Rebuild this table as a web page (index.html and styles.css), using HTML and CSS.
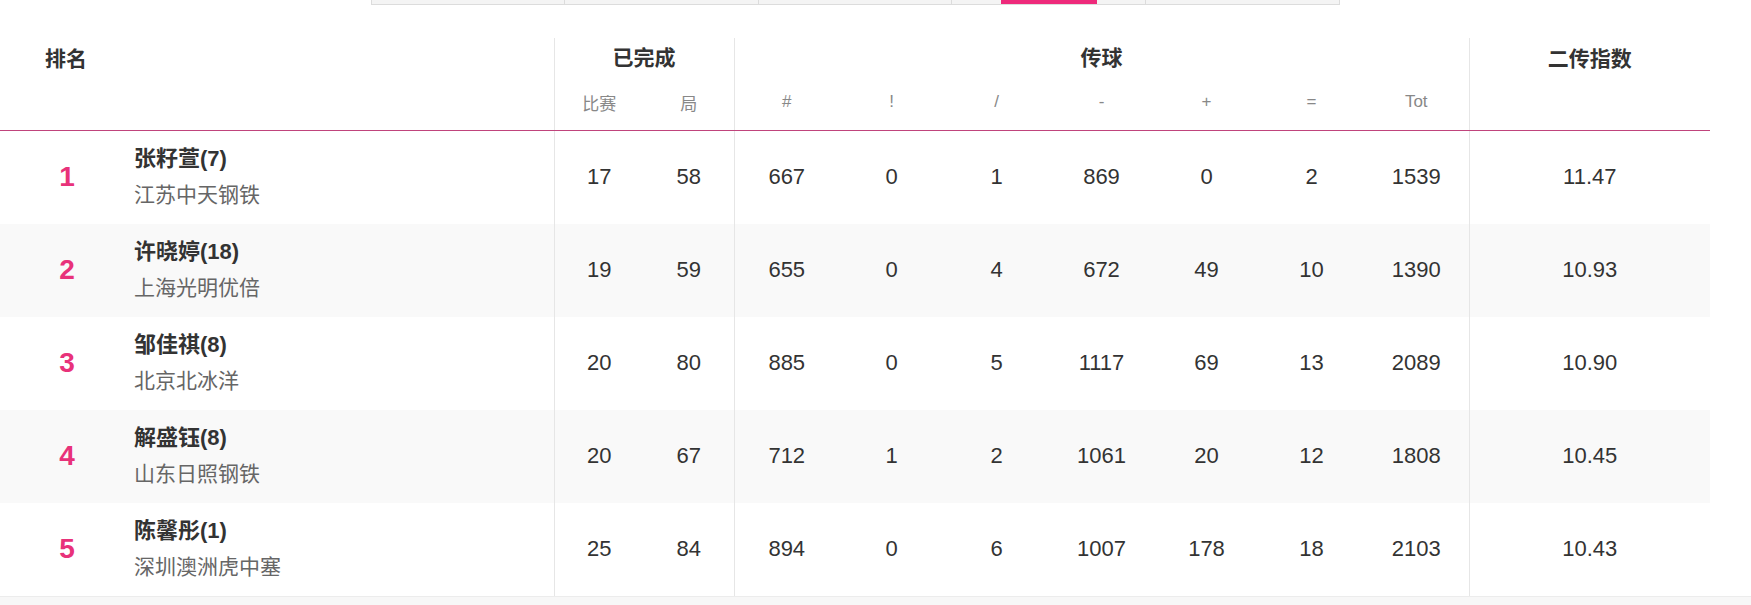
FILE: index.html
```html
<!DOCTYPE html>
<html lang="zh-CN">
<head>
<meta charset="utf-8">
<title>二传排名</title>
<link rel="stylesheet" href="styles.css">
</head>
<body>
<div class="page">
  <div class="tabs">
    <div class="tab"></div>
    <div class="tab"></div>
    <div class="tab"></div>
    <div class="tab active"><span class="bar"></span></div>
    <div class="tab"></div>
  </div>
  <table class="rank">
    <colgroup>
      <col class="c-rank"><col class="c-name">
      <col class="c-done"><col class="c-done">
      <col class="c-pass"><col class="c-pass"><col class="c-pass"><col class="c-pass"><col class="c-pass"><col class="c-pass"><col class="c-pass">
      <col class="c-idx">
    </colgroup>
    <thead>
      <tr class="h1">
        <th colspan="2" rowspan="2" class="h-rank">排名</th>
        <th colspan="2" class="grp">已完成</th>
        <th colspan="7" class="grp">传球</th>
        <th rowspan="2" class="grp h-idx">二传指数</th>
      </tr>
      <tr class="h2">
        <th class="grp">比赛</th><th>局</th>
        <th class="grp">#</th><th>!</th><th>/</th><th>-</th><th>+</th><th>=</th><th>Tot</th>
      </tr>
    </thead>
    <tbody>
      <tr>
        <td class="no">1</td>
        <td class="who"><div class="nm">张籽萱(7)</div><div class="tm">江苏中天钢铁</div></td>
        <td class="grp">17</td><td>58</td>
        <td class="grp">667</td><td>0</td><td>1</td><td>869</td><td>0</td><td>2</td><td>1539</td>
        <td class="grp">11.47</td>
      </tr>
      <tr>
        <td class="no">2</td>
        <td class="who"><div class="nm">许晓婷(18)</div><div class="tm">上海光明优倍</div></td>
        <td class="grp">19</td><td>59</td>
        <td class="grp">655</td><td>0</td><td>4</td><td>672</td><td>49</td><td>10</td><td>1390</td>
        <td class="grp">10.93</td>
      </tr>
      <tr>
        <td class="no">3</td>
        <td class="who"><div class="nm">邹佳祺(8)</div><div class="tm">北京北冰洋</div></td>
        <td class="grp">20</td><td>80</td>
        <td class="grp">885</td><td>0</td><td>5</td><td>1117</td><td>69</td><td>13</td><td>2089</td>
        <td class="grp">10.90</td>
      </tr>
      <tr>
        <td class="no">4</td>
        <td class="who"><div class="nm">解盛钰(8)</div><div class="tm">山东日照钢铁</div></td>
        <td class="grp">20</td><td>67</td>
        <td class="grp">712</td><td>1</td><td>2</td><td>1061</td><td>20</td><td>12</td><td>1808</td>
        <td class="grp">10.45</td>
      </tr>
      <tr>
        <td class="no">5</td>
        <td class="who"><div class="nm">陈馨彤(1)</div><div class="tm">深圳澳洲虎中塞</div></td>
        <td class="grp">25</td><td>84</td>
        <td class="grp">894</td><td>0</td><td>6</td><td>1007</td><td>178</td><td>18</td><td>2103</td>
        <td class="grp">10.43</td>
      </tr>
    </tbody>
  </table>
  <div class="foot"></div>
</div>
</body>
</html>
```

FILE: styles.css
```css
html, body {
  margin: 0;
  padding: 0;
  background: #fff;
}
body {
  font-family: "Liberation Sans", "Noto Sans CJK SC", sans-serif;
  color: #333;
}
.page {
  width: 1710px;
}
.tabs {
  display: flex;
  width: 967px;
  height: 4px;
  margin: 0 auto;
  background: #f4f4f4;
  border-left: 1px solid #dcdcdc;
  border-right: 1px solid #dcdcdc;
  border-bottom: 1px solid #dcdcdc;
  box-sizing: content-box;
}
.tab {
  flex: 1;
  display: flex;
  justify-content: center;
  border-right: 1px solid #dcdcdc;
}
.tab:last-child {
  border-right: none;
}
.tab .bar {
  display: block;
  width: 96px;
  height: 4px;
  background: #ee2a7b;
}
.rank {
  margin-top: 33px;
  width: 1710px;
  table-layout: fixed;
  border-collapse: collapse;
  border-spacing: 0;
}
.c-rank { width: 134px; }
.c-name { width: 420px; }
.c-done { width: 90px; }
.c-pass { width: 105px; }
.c-idx { width: 241px; }
.rank th, .rank td {
  padding: 0;
  text-align: center;
}
.rank .grp {
  border-left: 1px solid #e6e6e6;
}
.h1 th {
  height: 36px;
  font-size: 21px;
  font-weight: bold;
  color: #333;
  vertical-align: middle;
}
.h1 .h-rank {
  text-align: left;
  padding-left: 45px;
  vertical-align: top;
  padding-top: 4px;
}
.h1 .h-idx {
  vertical-align: top;
  padding-top: 4px;
}
.h2 th {
  height: 56px;
  font-size: 17px;
  font-weight: normal;
  color: #888;
  vertical-align: middle;
  border-bottom: 1px solid #c0447c;
}
.rank thead tr.h1 th.h-rank,
.rank thead tr.h1 th.h-idx {
  border-bottom: 1px solid #c0447c;
}
.rank tbody tr {
  height: 93px;
}
.rank tbody tr:nth-child(even) {
  background: #f9f9f9;
}
.rank td {
  font-size: 22px;
  color: #333;
  vertical-align: middle;
}
.rank td.no {
  font-size: 28px;
  font-weight: bold;
  color: #e8327a;
}
.rank td.who {
  text-align: left;
}
.nm {
  font-size: 22px;
  font-weight: bold;
  color: #333;
  line-height: 28px;
}
.tm {
  font-size: 21px;
  color: #666;
  line-height: 28px;
  margin-top: 8px;
}
.foot {
  height: 8px;
  width: 1751px;
  background: #f7f7f7;
  border-top: 1px solid #ececec;
}
```
